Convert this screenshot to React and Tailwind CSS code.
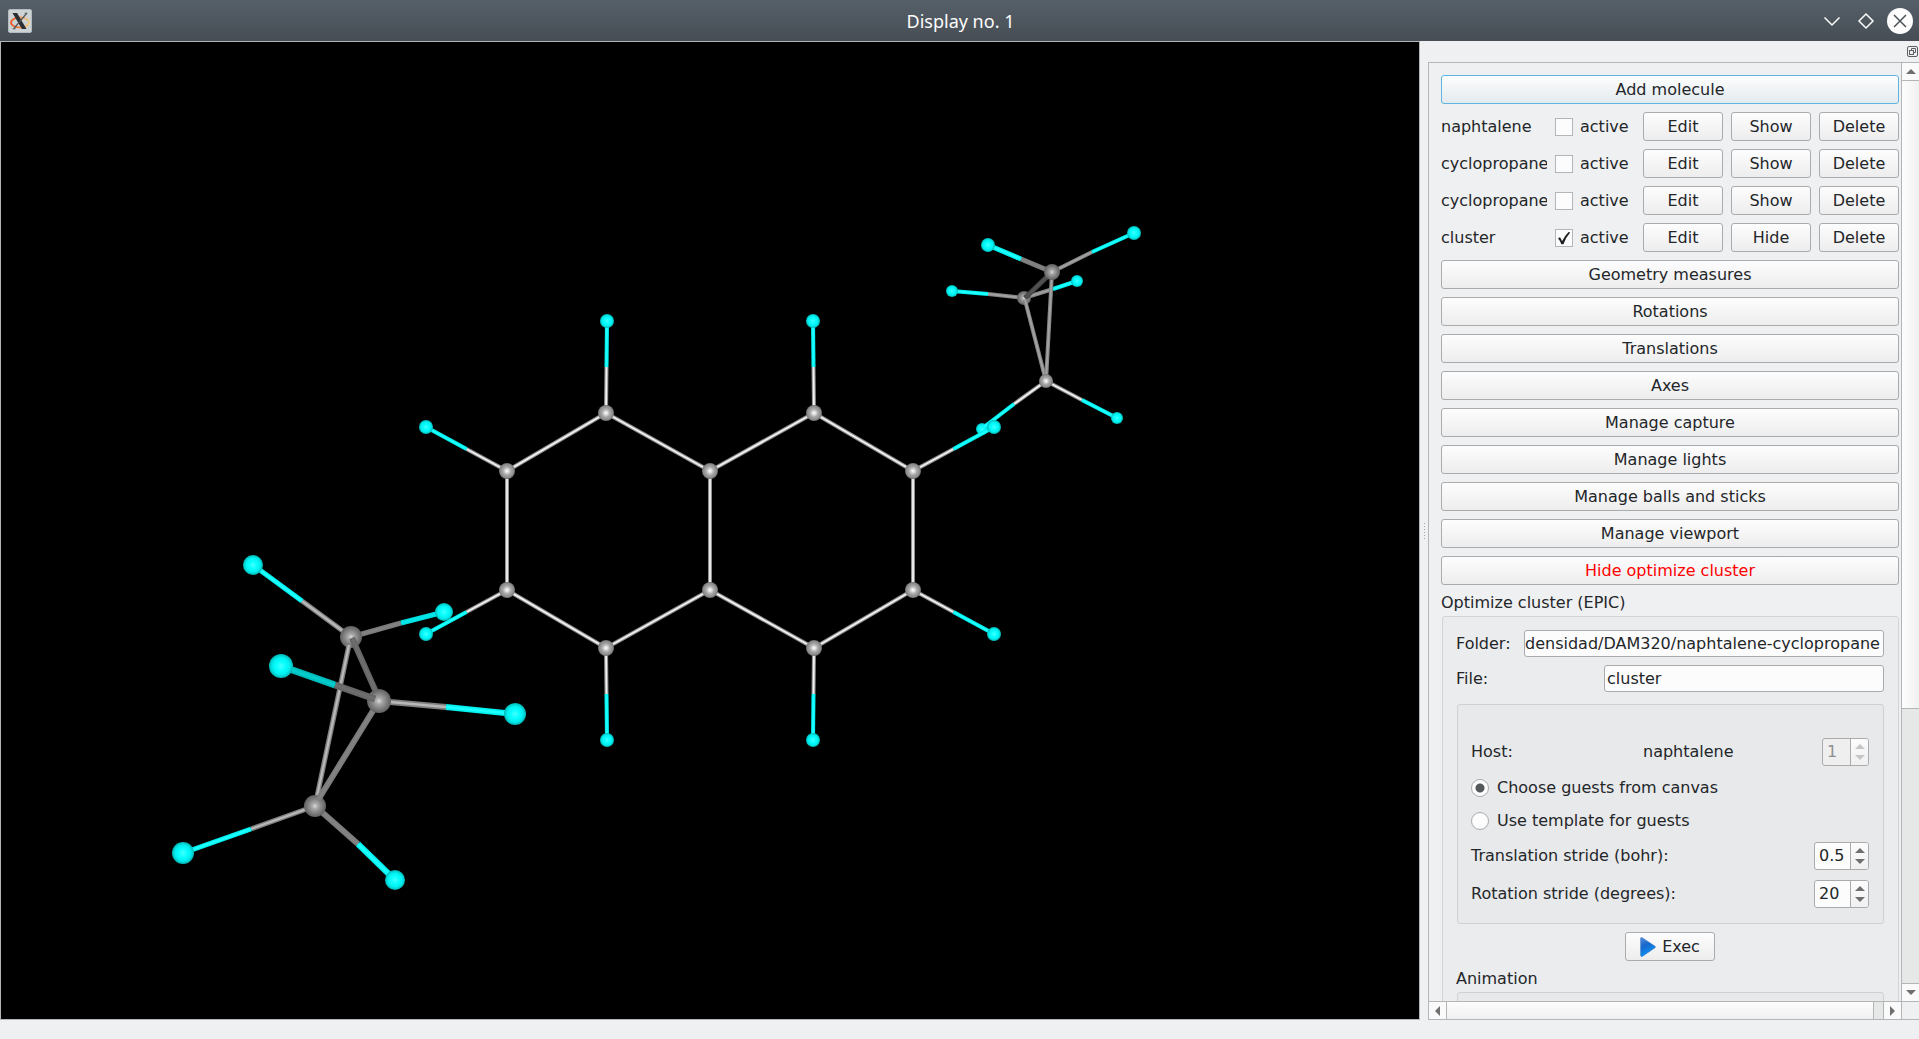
import React, { useState } from "react";

const CARBON = "carbon";
const HYDROGEN = "hydrogen";

/* Shading of a stick: colour of its edges and of the lit centre line. */
const TONES = {
  bright: { edge: "#8e8e8e", core: "#f2f2f2" },
  mid: { edge: "#808080", core: "#b8b8b8" },
  soft: { edge: "#858585", core: "#a2a2a2" },
  flat: { edge: "#7c7c7c", core: "#828282" },
  dim: { edge: "#666666", core: "#6e6e6e" },
  dark: { edge: "#484848", core: "#525252" },
  cyan: { edge: "#00f2f2", core: "#1effff" },
  teal: { edge: "#00e0e0", core: "#00e8e8" },
  deep: { edge: "#00bcbc", core: "#00cccc" },
};

const ring = [
  [507, 471, 606, 413],
  [606, 413, 710, 471],
  [710, 471, 710, 590],
  [710, 590, 606, 648],
  [606, 648, 507, 590],
  [507, 590, 507, 471],
  [710, 471, 814, 413],
  [814, 413, 913, 471],
  [913, 471, 913, 590],
  [913, 590, 814, 648],
  [814, 648, 710, 590],
];

const ringHydrogens = [
  [606, 413, 607, 321],
  [507, 471, 426, 427],
  [507, 590, 426, 634],
  [606, 648, 607, 740],
  [814, 413, 813, 321],
  [913, 471, 994, 427],
  [913, 590, 994, 634],
  [814, 648, 813, 740],
];

function Stick({ x1, y1, x2, y2, w, tone }) {
  const t = TONES[tone];
  return (
    <g>
      <line x1={x1} y1={y1} x2={x2} y2={y2} stroke={t.edge} strokeWidth={w} />
      <line x1={x1} y1={y1} x2={x2} y2={y2} stroke={t.core} strokeWidth={w * 0.45} />
    </g>
  );
}

function Bond({ from, split, to, w, a, b }) {
  return (
    <g>
      <Stick x1={from[0]} y1={from[1]} x2={split[0]} y2={split[1]} w={w} tone={a} />
      <Stick x1={split[0]} y1={split[1]} x2={to[0]} y2={to[1]} w={w} tone={b} />
    </g>
  );
}

function Atom({ x, y, r, kind, near }) {
  const fill =
    kind === CARBON ? (near ? "url(#carbonNear)" : "url(#carbon)") : "url(#hydrogen)";
  return <circle cx={x} cy={y} r={r} fill={fill} />;
}

function MoleculeView() {
  return (
    <svg
      className="h-full w-full"
      viewBox="1 42 1418 977"
      preserveAspectRatio="xMidYMid meet"
      role="img"
      aria-label="Molecule cluster"
    >
      <defs>
        <radialGradient id="carbon">
          <stop offset="0" stopColor="#ffffff" />
          <stop offset="0.2" stopColor="#e0e0e0" />
          <stop offset="0.5" stopColor="#a8a8a8" />
          <stop offset="0.85" stopColor="#8a8a8a" />
          <stop offset="1" stopColor="#6a6a6a" />
        </radialGradient>
        <radialGradient id="carbonNear">
          <stop offset="0" stopColor="#dcdcdc" />
          <stop offset="0.25" stopColor="#aaaaaa" />
          <stop offset="0.6" stopColor="#858585" />
          <stop offset="1" stopColor="#606060" />
        </radialGradient>
        <radialGradient id="hydrogen">
          <stop offset="0" stopColor="#48ffff" />
          <stop offset="0.35" stopColor="#0cffff" />
          <stop offset="0.7" stopColor="#00f0f0" />
          <stop offset="1" stopColor="#00b4b4" />
        </radialGradient>
      </defs>

      {/* upper right cyclopropane */}
      <Atom x={982} y={429} r={6} kind={HYDROGEN} />
      <Bond from={[1046, 381]} split={[1014, 404]} to={[984, 427]} w={4} a="bright" b="cyan" />
      <Bond from={[1046, 381]} split={[1082, 400]} to={[1117, 418]} w={4} a="bright" b="cyan" />
      <Bond from={[1024, 298]} split={[1053, 289]} to={[1077, 281]} w={4} a="soft" b="cyan" />
      <Bond from={[1024, 298]} split={[988, 294]} to={[952, 291]} w={4} a="soft" b="cyan" />
      <Atom x={1024} y={298} r={7} kind={CARBON} near />
      <Stick x1={1025} y1={298} x2={1052} y2={272} w={5} tone="dark" />
      <Stick x1={1025} y1={300} x2={1046} y2={381} w={4} tone="soft" />
      <Stick x1={1052} y1={272} x2={1046} y2={381} w={4} tone="soft" />
      <Bond from={[1052, 272]} split={[1021, 259]} to={[988, 245]} w={5} a="flat" b="cyan" />
      <Bond from={[1052, 272]} split={[1092, 252]} to={[1134, 233]} w={4} a="soft" b="cyan" />
      <Atom x={1052} y={272} r={8} kind={CARBON} near />
      <Atom x={1046} y={381} r={7} kind={CARBON} />
      <Atom x={988} y={245} r={7} kind={HYDROGEN} />
      <Atom x={1134} y={233} r={7} kind={HYDROGEN} />
      <Atom x={952} y={291} r={6} kind={HYDROGEN} />
      <Atom x={1077} y={281} r={6} kind={HYDROGEN} />
      <Atom x={1117} y={418} r={6} kind={HYDROGEN} />

      {/* the hydrogen of the lower cyclopropane that lies behind naphtalene */}
      <Bond from={[351, 637]} split={[401, 623]} to={[444, 612]} w={5} a="flat" b="teal" />
      <Atom x={444} y={612} r={9} kind={HYDROGEN} />

      {/* naphtalene */}
      {ring.map(([x1, y1, x2, y2], i) => (
        <Stick key={i} x1={x1} y1={y1} x2={x2} y2={y2} w={4} tone="bright" />
      ))}
      {ringHydrogens.map(([x1, y1, x2, y2], i) => (
        <g key={i}>
          <Bond
            from={[x1, y1]}
            split={[(x1 + x2) / 2, (y1 + y2) / 2]}
            to={[x2, y2]}
            w={4}
            a="bright"
            b="cyan"
          />
          <Atom x={x1} y={y1} r={8} kind={CARBON} />
          <Atom x={x2} y={y2} r={7} kind={HYDROGEN} />
        </g>
      ))}
      <Atom x={710} y={471} r={8} kind={CARBON} />
      <Atom x={710} y={590} r={8} kind={CARBON} />

      {/* lower left cyclopropane */}
      <Bond from={[351, 637]} split={[302, 601]} to={[253, 565]} w={5} a="mid" b="cyan" />
      <Atom x={351} y={637} r={11} kind={CARBON} near />
      <Stick x1={349} y1={645} x2={315} y2={806} w={5} tone="mid" />
      <Bond from={[315, 806]} split={[251, 829]} to={[183, 853]} w={5} a="mid" b="cyan" />
      <Bond from={[315, 806]} split={[358, 844]} to={[395, 880]} w={6} a="flat" b="cyan" />
      <Atom x={315} y={806} r={11} kind={CARBON} near />
      <Stick x1={379} y1={701} x2={318} y2={800} w={6} tone="flat" />
      <Bond from={[379, 701]} split={[446, 707]} to={[515, 714]} w={6} a="mid" b="cyan" />
      <Atom x={379} y={701} r={12} kind={CARBON} near />
      <Stick x1={352} y1={638} x2={376} y2={692} w={6} tone="dim" />
      <Bond from={[375, 699]} split={[335, 685]} to={[281, 666]} w={7} a="dim" b="deep" />
      <Atom x={253} y={565} r={10} kind={HYDROGEN} />
      <Atom x={281} y={666} r={12} kind={HYDROGEN} />
      <Atom x={515} y={714} r={11} kind={HYDROGEN} />
      <Atom x={183} y={853} r={11} kind={HYDROGEN} />
      <Atom x={395} y={880} r={10} kind={HYDROGEN} />
    </svg>
  );
}

function XLogo() {
  return (
    <svg className="size-6" viewBox="0 0 24 24" aria-hidden="true">
      <defs>
        <linearGradient id="xring" x1="0" x2="1">
          <stop offset="0" stopColor="#f0501e" />
          <stop offset="0.5" stopColor="#ee8a4a" />
          <stop offset="1" stopColor="#f2cf7c" />
        </linearGradient>
      </defs>
      <rect x="0.5" y="0.5" width="23" height="23" rx="1.5" fill="#cdd3d5" stroke="#b4bbbe" />
      <ellipse cx="12" cy="13.5" rx="9" ry="5" fill="none" stroke="url(#xring)" strokeWidth="1.8" />
      <path d="M4.5 4h4.6l9.4 16h-4.6z" fill="#2b2f31" />
      <path d="M18.8 4.2 5.6 19.8" stroke="#4a5053" strokeWidth="1.3" />
      <path d="M4.6 19.8h3M16.5 4.2h2.8" stroke="#4a5053" strokeWidth="0.8" />
    </svg>
  );
}

function TitleBar() {
  return (
    <header className="grid h-[41px] shrink-0 grid-cols-[1fr_auto_1fr] items-center bg-linear-to-b from-[#566069] to-[#464d54] pr-[6px] pl-2">
      <XLogo />
      <h1 className="font-['Noto_Sans',sans-serif] text-lg leading-6 text-[#fcfcfc]">
        Display no. 1
      </h1>
      <div className="flex items-center justify-end gap-2">
        <button type="button" aria-label="Minimize" className="size-[26px]">
          <svg viewBox="0 0 26 26" className="size-[26px]" fill="none" stroke="#fcfcfc" strokeWidth="1.5">
            <path d="M5.5 9.5 13 17l7.5-7.5" />
          </svg>
        </button>
        <button type="button" aria-label="Maximize" className="size-[26px]">
          <svg viewBox="0 0 26 26" className="size-[26px]" fill="none" stroke="#fcfcfc" strokeWidth="1.5">
            <path d="m13 6 7 7-7 7-7-7z" />
          </svg>
        </button>
        <button type="button" aria-label="Close" className="size-[26px]">
          <svg viewBox="0 0 26 26" className="size-[26px]" fill="none">
            <circle cx="13" cy="13" r="13" fill="#fcfcfc" />
            <path d="m7 7 12 12M19 7 7 19" stroke="#4b5359" strokeWidth="1.5" />
          </svg>
        </button>
      </div>
    </header>
  );
}

const buttonLook =
  "flex h-[29px] shrink-0 items-center justify-center rounded-[3px] border bg-linear-to-b";
const normalLook = "border-[#aaabac] from-[#fdfdfd] to-[#ededee]";
const focusLook = "border-[#5eb3e2] from-[#fdfdfd] to-[#e3eaee]";

function WideButton({ children, focused, red }) {
  return (
    <button
      type="button"
      className={`${buttonLook} w-full ${focused ? focusLook : normalLook} ${red ? "text-[#ff0000]" : ""}`}
    >
      {children}
    </button>
  );
}

function MoleculeRow({ id, name, shown }) {
  const [active, setActive] = useState(shown);
  return (
    <div className="flex shrink-0 items-center">
      <span className="w-[106px] overflow-hidden">{name}</span>
      <div className="ml-2 grid">
        <input
          id={id}
          type="checkbox"
          checked={active}
          onChange={(e) => setActive(e.target.checked)}
          className="peer col-start-1 row-start-1 size-[18px] appearance-none border border-[#b4b5b6] bg-[#fcfcfc]"
        />
        <svg
          viewBox="0 0 18 18"
          className="pointer-events-none invisible col-start-1 row-start-1 size-[18px] peer-checked:visible"
          aria-hidden="true"
        >
          <path
            d="M3 9.2 5 8.2Q6.4 10 7 12.2 9.5 7 13.6 3L15.2 3.6Q10.800 8.500 8.400 15.200L6.400 15.200Q5.200 11.800 3 9.200z"
            fill="#1b1e20"
          />
        </svg>
      </div>
      <label htmlFor={id} className="ml-[7px] flex-1">
        active
      </label>
      <div className="flex gap-2">
        <button type="button" className={`${buttonLook} ${normalLook} w-20`}>
          Edit
        </button>
        <button type="button" className={`${buttonLook} ${normalLook} w-20`}>
          {shown ? "Hide" : "Show"}
        </button>
        <button type="button" className={`${buttonLook} ${normalLook} w-20`}>
          Delete
        </button>
      </div>
    </div>
  );
}

function Triangle({ dir, color = "#6e6f70" }) {
  const d = {
    up: "M0 5 5 0l5 5z",
    down: "M0 0h10L5 5z",
    left: "M5 0v10L0 5z",
    right: "M0 0v10l5-5z",
  }[dir];
  const tall = dir === "left" || dir === "right";
  return (
    <svg
      viewBox={tall ? "0 0 5 10" : "0 0 10 5"}
      className={tall ? "h-[10px] w-[5px]" : "h-[5px] w-[10px]"}
      aria-hidden="true"
    >
      <path d={d} fill={color} />
    </svg>
  );
}

function SpinBox({ id, value, step, disabled, narrow }) {
  const [v, setV] = useState(value);
  const tint = disabled ? "#c4c5c6" : "#6e6f70";
  return (
    <div
      className={`flex h-7 overflow-hidden rounded-[3px] border border-[#aaabac] ${narrow ? "w-[47px]" : "w-[55px]"} ${disabled ? "bg-[#efefef] text-[#8e8f90]" : "bg-[#fcfcfc]"}`}
    >
      <input
        id={id}
        type="number"
        step={step}
        value={v}
        disabled={disabled}
        onChange={(e) => setV(e.target.value)}
        className="w-0 flex-1 pl-1 outline-none [appearance:textfield] [&::-webkit-inner-spin-button]:appearance-none"
      />
      <div className="flex w-[18px] flex-col items-center justify-center gap-[6px] border-l border-[#aaabac] bg-linear-to-b from-[#fcfcfc] to-[#f0f0f1]">
        <button type="button" aria-label="Increase" disabled={disabled}>
          <Triangle dir="up" color={tint} />
        </button>
        <button type="button" aria-label="Decrease" disabled={disabled}>
          <Triangle dir="down" color={tint} />
        </button>
      </div>
    </div>
  );
}

function Radio({ id, label, checked, onChange }) {
  return (
    <div className="flex h-[23px] items-center gap-2">
      <input
        id={id}
        type="radio"
        name="guests"
        checked={checked}
        onChange={onChange}
        className="size-[18px] appearance-none rounded-full border border-[#aaabac] bg-[#fcfcfc] checked:bg-[radial-gradient(circle,#55585a_0_4px,#fcfcfc_5px)]"
      />
      <label htmlFor={id}>{label}</label>
    </div>
  );
}

const fieldLook =
  "h-[27px] min-w-0 rounded-[3px] border border-[#aaabac] bg-[#fcfcfc] outline-none";

function OptimizePanel() {
  const [source, setSource] = useState("canvas");
  return (
    <section className="shrink-0">
      <h2>Optimize cluster (EPIC)</h2>
      <div className="mt-[3px] ml-px rounded-[3px] border border-[#d2d3d5] bg-[#ebecee] py-[13px] pr-[14px] pl-[13px]">
        <div className="flex items-center">
          <label htmlFor="folder" className="w-[68px]">
            Folder:
          </label>
          <input
            id="folder"
            type="text"
            defaultValue="densidad/DAM320/naphtalene-cyclopropane"
            className={`${fieldLook} flex-1`}
          />
        </div>
        <div className="mt-2 flex items-center">
          <label htmlFor="file" className="w-[148px]">
            File:
          </label>
          <input id="file" type="text" defaultValue="cluster" className={`${fieldLook} flex-1 pl-[2px]`} />
        </div>

        <div className="mt-3 ml-px flex flex-col gap-[10px] rounded-[3px] border border-[#cfd0d2] bg-[#e8e9eb] pt-[33px] pr-[14px] pb-[15px] pl-[13px]">
          <div className="flex items-center">
            <label htmlFor="host" className="w-[172px]">
              Host:
            </label>
            <span className="flex-1">naphtalene</span>
            <SpinBox id="host" value="1" step="1" disabled narrow />
          </div>
          <Radio
            id="from-canvas"
            label="Choose guests from canvas"
            checked={source === "canvas"}
            onChange={() => setSource("canvas")}
          />
          <Radio
            id="from-template"
            label="Use template for guests"
            checked={source === "template"}
            onChange={() => setSource("template")}
          />
          <div className="flex items-center justify-between">
            <label htmlFor="translation">Translation stride (bohr):</label>
            <SpinBox id="translation" value="0.5" step="0.1" />
          </div>
          <div className="flex items-center justify-between">
            <label htmlFor="rotation">Rotation stride (degrees):</label>
            <SpinBox id="rotation" value="20" step="1" />
          </div>
        </div>

        <div className="mt-2 flex justify-center">
          <button type="button" className={`${buttonLook} ${normalLook} w-[90px] gap-[6px]`}>
            <svg viewBox="0 0 16 20" className="h-5 w-4" aria-hidden="true">
              <defs>
                <linearGradient id="play" x1="0" y1="0" x2="0.4" y2="1">
                  <stop offset="0" stopColor="#5b8fd8" />
                  <stop offset="0.45" stopColor="#1768cc" />
                  <stop offset="1" stopColor="#0c94f4" />
                </linearGradient>
              </defs>
              <path
                d="M0.6 1.6Q0.6 0 2.2 0.8L15 9.2Q16 10 15 10.8L2.6 19.2Q0.6 20 0.6 18.4z"
                fill="url(#play)"
                stroke="#3a78c8"
                strokeWidth="0.6"
              />
            </svg>
            Exec
          </button>
        </div>

        <section className="mt-2">
          <h3>Animation</h3>
          <div className="mt-[3px] ml-px h-24 rounded-[3px] border border-[#cfd0d2] bg-[#e8e9eb]" />
        </section>
      </div>
    </section>
  );
}

function SplitHandle() {
  return (
    <div className="flex w-2 flex-col items-center justify-center gap-[2px]">
      {[0, 1, 2, 3, 4, 5].map((i) => (
        <span key={i} className="size-px bg-[#a4a5a6]" />
      ))}
    </div>
  );
}

function SidePanel() {
  return (
    <aside className="flex w-[499px] shrink-0">
      <SplitHandle />
      <div className="flex min-w-0 flex-1 flex-col">
        <div className="flex h-[21px] shrink-0 items-center justify-end pr-px">
          <button type="button" aria-label="Float panel" className="size-[11px]">
            <svg viewBox="0 0 11 11" className="size-[11px]" fill="none" stroke="#5c5f61">
              <rect x="0.5" y="0.5" width="10" height="10" rx="1.5" />
              <path d="M4.5 4.5v-2h4v4h-2" />
              <rect x="2.5" y="4.5" width="4" height="4" />
            </svg>
          </button>
        </div>
        <div className="grid min-h-0 flex-1 grid-cols-[minmax(0,1fr)_18px] grid-rows-[minmax(0,1fr)_18px] border-y border-l border-[#b4b5b6]">
          <div className="flex flex-col gap-2 overflow-hidden pt-3 pr-[2px] pl-3">
            <WideButton focused>Add molecule</WideButton>
            <MoleculeRow id="m1" name="naphtalene" shown={false} />
            <MoleculeRow id="m2" name="cyclopropane" shown={false} />
            <MoleculeRow id="m3" name="cyclopropane" shown={false} />
            <MoleculeRow id="m4" name="cluster" shown />
            <WideButton>Geometry measures</WideButton>
            <WideButton>Rotations</WideButton>
            <WideButton>Translations</WideButton>
            <WideButton>Axes</WideButton>
            <WideButton>Manage capture</WideButton>
            <WideButton>Manage lights</WideButton>
            <WideButton>Manage balls and sticks</WideButton>
            <WideButton>Manage viewport</WideButton>
            <WideButton red>Hide optimize cluster</WideButton>
            <OptimizePanel />
          </div>

          <div className="flex flex-col border-l border-[#b4b5b6] bg-[#e6e7e7]">
            <button
              type="button"
              aria-label="Scroll up"
              className="flex h-[18px] items-center justify-center border-b border-[#b4b5b6] bg-[#fafafa]"
            >
              <Triangle dir="up" />
            </button>
            <div className="flex-[628] border-b border-[#b4b5b6] bg-linear-to-r from-[#fdfdfd] to-[#f0f0f0]" />
            <div className="flex-[275]" />
            <button
              type="button"
              aria-label="Scroll down"
              className="flex h-[18px] items-center justify-center border-t border-[#b4b5b6] bg-[#fafafa]"
            >
              <Triangle dir="down" />
            </button>
          </div>

          <div className="flex border-t border-[#b4b5b6] bg-[#e6e7e7]">
            <button
              type="button"
              aria-label="Scroll left"
              className="flex w-[18px] items-center justify-center border-r border-[#b4b5b6] bg-[#fafafa]"
            >
              <Triangle dir="left" />
            </button>
            <div className="flex-[427] border-r border-[#b4b5b6] bg-linear-to-b from-[#fdfdfd] to-[#f0f0f0]" />
            <div className="flex-[9]" />
            <button
              type="button"
              aria-label="Scroll right"
              className="flex w-[18px] items-center justify-center border-l border-[#b4b5b6] bg-[#fafafa]"
            >
              <Triangle dir="right" />
            </button>
          </div>
          <div className="border-t border-l border-[#b4b5b6]" />
        </div>
      </div>
    </aside>
  );
}

export default function App() {
  return (
    <div className="flex h-screen flex-col overflow-hidden bg-[#eff0f1] font-['DejaVu_Sans',sans-serif] text-base leading-5 text-[#232629]">
      <TitleBar />
      <div className="flex min-h-0 flex-1">
        <main className="min-w-0 flex-1 border border-[#b4b5b6] bg-black">
          <MoleculeView />
        </main>
        <SidePanel />
      </div>
      <footer className="h-[19px] shrink-0" />
    </div>
  );
}
